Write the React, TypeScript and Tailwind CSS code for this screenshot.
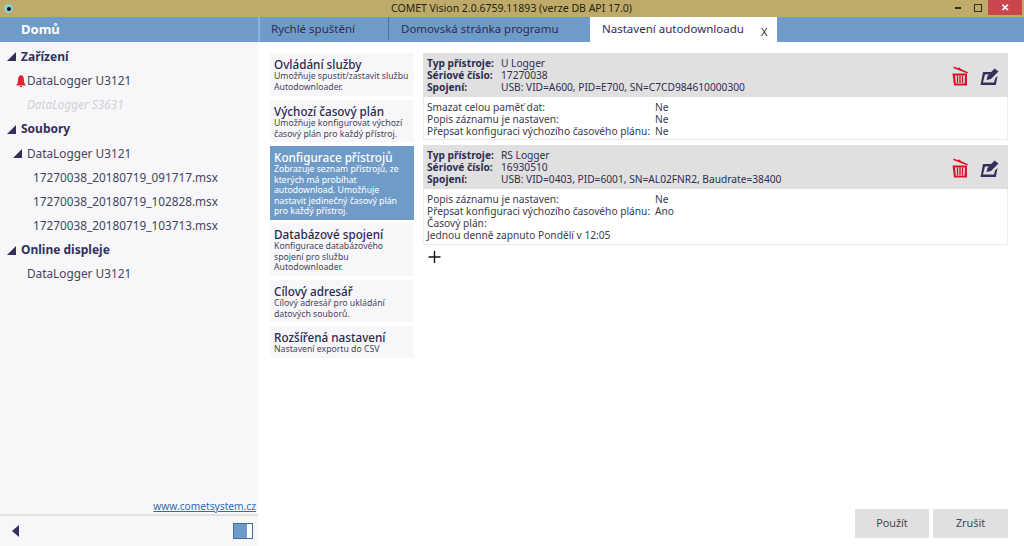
import React from 'react';

const menu = [
  { title: 'Ovládání služby', lines: ['Umožňuje spustit/zastavit službu', 'Autodownloader.'], h: 'h-[43px]' },
  { title: 'Výchozí časový plán', lines: ['Umožňuje konfigurovat výchozí', 'časový plán pro každý přístroj.'], h: 'h-[42px]' },
  {
    title: 'Konfigurace přístrojů',
    lines: ['Zobrazuje seznam přístrojů, ze', 'kterých má probíhat', 'autodownload. Umožňuje', 'nastavit jedinečný časový plán', 'pro každý přístroj.'],
    h: 'h-[74px] -mb-[1px]',
    active: true,
  },
  { title: 'Databázové spojení', lines: ['Konfigurace databázového', 'spojení pro službu', 'Autodownloader.'], h: 'h-[53px]' },
  { title: 'Cílový adresář', lines: ['Cílový adresář pro ukládání', 'datových souborů.'], h: 'h-[42px]' },
  { title: 'Rozšířená nastavení', lines: ['Nastavení exportu do CSV'], h: 'h-[32px]' },
];

function Arrow({ className = '' }: { className?: string }) {
  return (
    <svg width="9" height="9" viewBox="0 0 9 9" className={className}>
      <path d="M0 9 L9 0 V9 Z" fill="#34305e" />
    </svg>
  );
}

function TrashIcon() {
  return (
    <svg width="18" height="20" viewBox="0 0 18 20">
      <path d="M2 2 L3 0.5 L7 2.2 L8 1.2 L10 3 L17 6.2 L16.4 7.4 L1.5 1.8 Z" fill="#d9122b" />
      <path d="M1.5 7.5 H16 V19.5 H3 Z M4 9.5 L4.8 17.5 H13.6 L14 9.5 Z" fill="#d9122b" fillRule="evenodd" />
      <path d="M6.5 9.5 V17 M9 9.5 V17 M11.5 9.5 V17" stroke="#d9122b" strokeWidth="1.4" />
    </svg>
  );
}

function EditIcon() {
  return (
    <svg width="19" height="19" viewBox="0 0 19 19">
      <path d="M3 5 H12 L9.5 7.5 H5 L3 15.5 H14 L15 11.5 L17.5 9 L15.8 18 H0.5 Z" fill="#34305e" />
      <path d="M6.5 13 L7.5 9 L14.5 1.5 L18.5 4.5 L11 12 Z" fill="#34305e" />
    </svg>
  );
}

function Card({
  type,
  serial,
  link,
  rows,
  extra,
  bodyClass,
}: {
  type: string;
  serial: string;
  link: string;
  rows: [string, string][];
  extra?: string[];
  bodyClass: string;
}) {
  return (
    <div className="w-[585px] shrink-0">
      <div className="h-[44px] bg-[#e0e0e0] flex items-start pl-[4px] pr-[9px] pt-[4px] text-[10.2px] leading-[12px] text-[#2f2d4f]">
        <div className="w-[74px] font-bold">
          <div>Typ přístroje:</div>
          <div>Sériové číslo:</div>
          <div>Spojení:</div>
        </div>
        <div className="flex-1">
          <div>{type}</div>
          <div>{serial}</div>
          <div>{link}</div>
        </div>
        <div className="flex items-center gap-[11px] mt-[9px]">
          <TrashIcon />
          <EditIcon />
        </div>
      </div>
      <div className={`${bodyClass} border border-t-0 border-[#ececec] pl-[3px] pt-[4px] text-[10.2px] leading-[12px] text-[#3a3a4a]`}>
        {rows.map(([k, v]) => (
          <div key={k} className="flex">
            <span className="w-[228px] whitespace-nowrap">{k}</span>
            <span>{v}</span>
          </div>
        ))}
        {extra?.map((l) => <div key={l}>{l}</div>)}
      </div>
    </div>
  );
}

function TreeHead({ label }: { label: string }) {
  return (
    <div className="h-[24.2px] flex items-center pl-[7px] gap-[5px] font-bold text-[#34305e] text-[12px]">
      <Arrow />
      <span>{label}</span>
    </div>
  );
}

function TreeRow({ label, pl = 'pl-[27px]', muted = false }: { label: string; pl?: string; muted?: boolean }) {
  return (
    <div className={`h-[24.2px] flex items-center ${pl} text-[11.8px] ${muted ? 'italic text-[#d0d0d4]' : 'text-[#45455c]'}`}>
      {label}
    </div>
  );
}

export default function App() {
  return (
    <div className="w-[1024px] h-[546px] overflow-hidden flex flex-col bg-white font-['Noto_Sans',sans-serif]">
      {/* Title bar */}
      <div className="h-[17px] shrink-0 bg-[#bfab69] flex items-center">
        <div className="ml-[4px] w-[9px] h-[9px] rounded-full bg-[#8fd0d8] flex items-center justify-center">
          <div className="w-[4px] h-[4px] rounded-full bg-[#111]" />
        </div>
        <div className="flex-1 pl-[378px] text-[10.5px] text-[#26220f]">COMET Vision 2.0.6759.11893 (verze DB API 17.0)</div>
        <div className="flex items-center h-[15px] self-start">
          <div className="w-[6px] h-[2px] bg-[#2b2b2b] mr-[13px]" />
          <div className="w-[8px] h-[8px] border border-[#2b2b2b] mr-[6px]" />
          <div className="w-[34px] h-[15px] bg-[#c9464f] mr-[2px] text-white text-[10px] leading-[14px] text-center font-bold">✕</div>
        </div>
      </div>

      {/* Header row with tabs */}
      <div className="h-[25px] shrink-0 bg-[#6f9bc9] flex">
        <div className="w-[260px] pl-[21px] font-bold text-white text-[13px] leading-[25px] border-r-2 border-[#8fb3d8]">Domů</div>
        <div className="w-[129px] pl-[11px] text-[11.5px] leading-[23px] text-[#2f2d4f] border-r border-[#4d6f98] mb-[2px]">Rychlé spuštění</div>
        <div className="w-[201px] pl-[12px] text-[11.5px] leading-[23px] text-[#2f2d4f]">Domovská stránka programu</div>
        <div className="w-[187px] bg-white flex pl-[12px] text-[11.5px] leading-[23px] text-[#2f2d4f]">
          <span className="w-[159px]">Nastavení autodownloadu</span>
          <span className="text-[11px] leading-[29px]">X</span>
        </div>
      </div>

      <div className="flex-1 flex min-h-0">
        {/* Sidebar */}
        <div className="w-[258px] shrink-0 bg-[#f7f7f9] flex flex-col">
          <div className="flex-1 pt-[2.5px]">
            <TreeHead label="Zařízení" />
            <div className="h-[24.2px] flex items-center pl-[16px] gap-[1px] text-[11.8px] text-[#45455c]">
              <svg width="10" height="12" viewBox="0 0 10 12">
                <path d="M5 0 C7.5 0.5 8 3 8 5.5 C8 8 9 9 10 10.5 H0 C1 9 2 8 2 5.5 C2 3 2.5 0.5 5 0 Z M4 11 H6 V12 H4 Z" fill="#e0252f" />
              </svg>
              <span>DataLogger U3121</span>
            </div>
            <TreeRow label="DataLogger S3631" muted />
            <TreeHead label="Soubory" />
            <div className="h-[24.2px] flex items-center pl-[13px] gap-[5px] text-[11.8px] text-[#45455c]">
              <Arrow />
              <span>DataLogger U3121</span>
            </div>
            <TreeRow label="17270038_20180719_091717.msx" pl="pl-[33px]" />
            <TreeRow label="17270038_20180719_102828.msx" pl="pl-[33px]" />
            <TreeRow label="17270038_20180719_103713.msx" pl="pl-[33px]" />
            <TreeHead label="Online displeje" />
            <TreeRow label="DataLogger U3121" />
          </div>
          <div className="text-right pr-[2px] text-[10.2px] leading-[14px] pb-[1px] text-[#2f6cb0] underline">www.cometsystem.cz</div>
          <div className="h-[32px] border-t-2 border-[#e2e2e2] flex items-center justify-between pl-[12px] pr-[5px]">
            <div className="w-0 h-0 border-y-[6px] border-y-transparent border-r-[7px] border-r-[#34305e]" />
            <div className="w-[20px] h-[16px] border border-[#3f6d9f] bg-[#6f9bc9] flex justify-end">
              <div className="w-[5px] bg-white" />
            </div>
          </div>
        </div>

        {/* Main */}
        <div className="flex-1 flex flex-col pl-[12px] pt-[11px] pr-[16px] pb-[8px]">
          <div className="flex-1 flex gap-[9px] min-h-0">
            <div className="w-[144px] shrink-0 flex flex-col gap-[4px]">
              {menu.map((m) => (
                <div
                  key={m.title}
                  className={`${m.h} px-[4px] pt-[4px] whitespace-nowrap ${m.active ? 'bg-[#6f9bc9] text-white' : 'bg-[#f7f7f9] text-[#45455c]'}`}
                >
                  <div className={`text-[11.7px] leading-[14px] font-medium ${m.active ? 'text-white' : 'text-[#2b2950]'}`}>{m.title}</div>
                  {m.lines.map((l) => (
                    <div key={l} className="text-[8.7px] leading-[10.5px]">{l}</div>
                  ))}
                </div>
              ))}
            </div>
            <div className="flex flex-col">
              <Card
                type="U Logger"
                serial="17270038"
                link="USB: VID=A600, PID=E700, SN=C7CD984610000300"
                bodyClass="h-[43px]"
                rows={[
                  ['Smazat celou paměť dat:', 'Ne'],
                  ['Popis záznamu je nastaven:', 'Ne'],
                  ['Přepsat konfiguraci výchozího časového plánu:', 'Ne'],
                ]}
              />
              <div className="h-[5px] shrink-0" />
              <Card
                type="RS Logger"
                serial="16930510"
                link="USB: VID=0403, PID=6001, SN=AL02FNR2, Baudrate=38400"
                bodyClass="h-[56px]"
                rows={[
                  ['Popis záznamu je nastaven:', 'Ne'],
                  ['Přepsat konfiguraci výchozího časového plánu:', 'Ano'],
                ]}
                extra={['Časový plán:', 'Jednou denně zapnuto Pondělí v 12:05']}
              />
              <div className="ml-[5px] mt-[6px]">
                <svg width="13" height="13" viewBox="0 0 13 13">
                  <path d="M6.5 0 V12 M0.5 6 H12.5" stroke="#111" strokeWidth="1.4" />
                </svg>
              </div>
            </div>
          </div>
          <div className="flex justify-end gap-[4px]">
            <div className="w-[74px] h-[29px] bg-[#e0e0e0] flex items-center justify-center text-[10.8px] text-[#45455c]">Použít</div>
            <div className="w-[75px] h-[29px] bg-[#e0e0e0] flex items-center justify-center text-[10.8px] text-[#45455c]">Zrušit</div>
          </div>
        </div>
      </div>
    </div>
  );
}
